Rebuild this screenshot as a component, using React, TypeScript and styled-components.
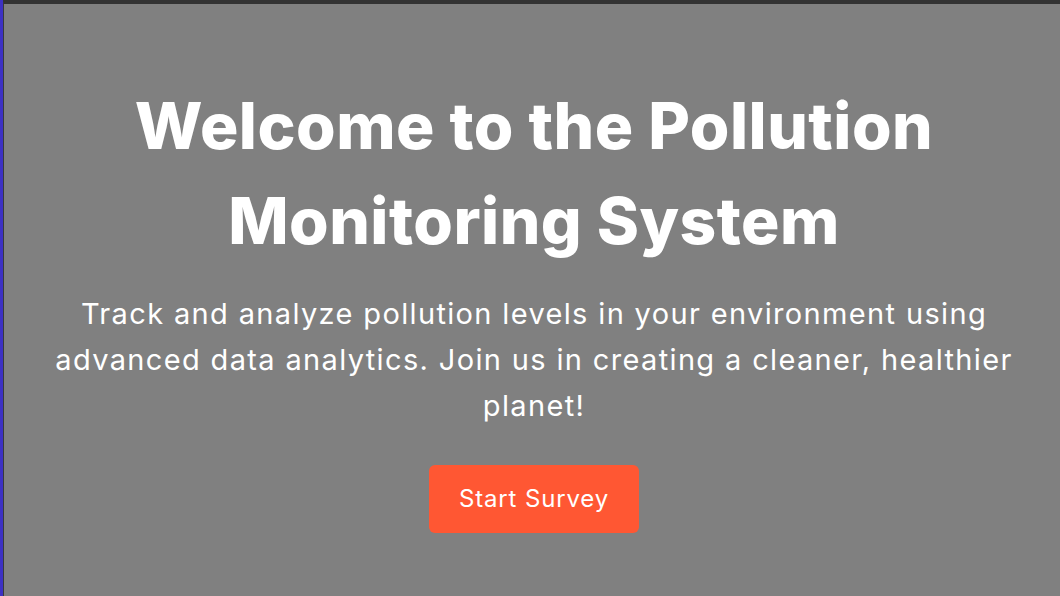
import React from "react";
import styled, { createGlobalStyle } from "styled-components";

const Global = createGlobalStyle`
  html, body { margin: 0; padding: 0; background: #808080; }
  body { font-family: "Inter", "Noto Sans", sans-serif; }
  * { box-sizing: border-box; }
`;

const Frame = styled.div`
  min-height: 596px;
  border-left: 3px solid #3d31c4;
  display: flex;
`;

const Hero = styled.section`
  flex: 1;
  border-top: 4px solid #333333;
  border-left: 1px solid #3a3a3a;
  background: #808080;
  color: #ffffff;
  display: flex;
  flex-direction: column;
  align-items: center;
  text-align: center;
  padding: 74px 16px 60px 20px;
`;

const Title = styled.h1`
  margin: 0;
  max-width: 880px;
  font-size: 64px;
  line-height: 95px;
  font-weight: 800;
  letter-spacing: 0.5px;
`;

const Lead = styled.p`
  margin: 23px 0 0;
  max-width: 1000px;
  font-size: 29px;
  line-height: 46px;
  font-weight: 400;
  letter-spacing: 1.35px;
`;

const Button = styled.button`
  margin-top: 36px;
  padding: 16px 30px;
  border: none;
  border-radius: 6px;
  background: #ff5733;
  color: #ffffff;
  font-family: inherit;
  font-size: 24px;
  line-height: 36px;
  letter-spacing: 0.85px;
  cursor: pointer;
`;

export default function App() {
  return (
    <>
      <Global />
      <Frame>
        <Hero>
          <Title>Welcome to the Pollution Monitoring System</Title>
          <Lead>
            Track and analyze pollution levels in your environment using
            advanced data analytics. Join us in creating a cleaner, healthier
            planet!
          </Lead>
          <Button>Start Survey</Button>
        </Hero>
      </Frame>
    </>
  );
}
